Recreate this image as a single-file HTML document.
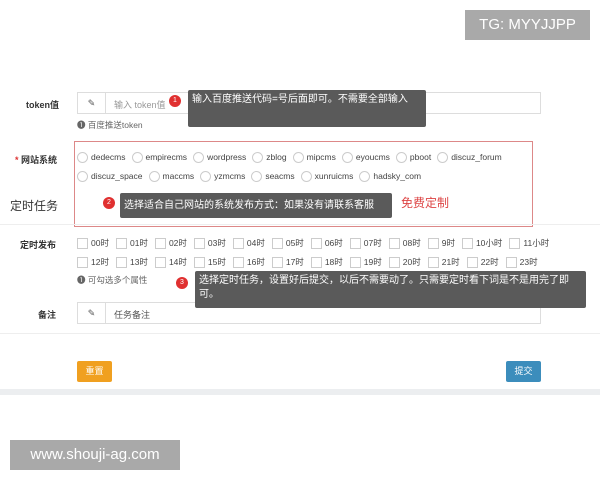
<!DOCTYPE html>
<html><head><meta charset="utf-8"><style>
*{margin:0;padding:0;box-sizing:border-box}
body{width:600px;height:480px;background:#fff;position:relative;overflow:hidden;font-family:"Liberation Sans","Noto Sans CJK SC",sans-serif;font-size:9px;color:#333}
.a{position:absolute;white-space:nowrap}
.lbl{font-weight:bold;font-size:9px;color:#333}
.inp{position:absolute;left:77px;width:464px;height:22px;border:1px solid #ddd;background:#fff}
.inp .ic{position:absolute;left:0;top:0;width:28px;height:20px;border-right:1px solid #ddd;text-align:center;line-height:20px;font-size:9px;color:#555}
.inp .ph{position:absolute;left:36px;top:5px;color:#999}
.tip{position:absolute;background:#5a5a5a;color:#fff;font-size:10px;padding:3px 4px;border-radius:2px;line-height:14px}
.bd{position:absolute;width:12px;height:12px;border-radius:50%;background:#e03030;color:#fff;font-size:7px;text-align:center;line-height:12px}
.r{display:inline-block;width:11px;height:11px;border:1px solid #ccc;border-radius:50%;vertical-align:middle;margin-right:3px}
.c{display:inline-block;width:11px;height:11px;border:1px solid #ccc;vertical-align:middle;margin-right:3px}
.row span{margin-right:6px;font-size:8.5px;color:#444}
.row2 span{margin-right:7px;font-size:8.5px;color:#444}
.hint{color:#666;font-size:8.5px}
</style></head><body>
<div class="a" style="left:465px;top:10px;width:125px;height:30px;background:#a9a9a9;color:#fff;font-size:15px;line-height:30px;text-align:center">TG: MYYJJPP</div>

<div class="a lbl" style="left:26px;top:98px">token值</div>
<div class="inp" style="top:92px"><div class="ic">✎</div><div class="ph">输入 token值</div></div>
<div class="bd" style="left:169px;top:95px">1</div>
<div class="tip" style="left:188px;top:90px;width:238px;height:37px">输入百度推送代码=号后面即可。不需要全部输入</div>
<div class="a hint" style="left:77px;top:119px">❶ 百度推送token</div>

<div class="a" style="left:74px;top:141px;width:459px;height:86px;border:1px solid #d88"></div>
<div class="a lbl" style="left:15px;top:153px"><span style="color:#d33">*</span> 网站系统</div>
<div class="a row" style="left:77px;top:152px"><i class="r"></i><span>dedecms</span><i class="r"></i><span>empirecms</span><i class="r"></i><span>wordpress</span><i class="r"></i><span>zblog</span><i class="r"></i><span>mipcms</span><i class="r"></i><span>eyoucms</span><i class="r"></i><span>pboot</span><i class="r"></i><span>discuz_forum</span></div>
<div class="a row" style="left:77px;top:171px"><i class="r"></i><span>discuz_space</span><i class="r"></i><span>maccms</span><i class="r"></i><span>yzmcms</span><i class="r"></i><span>seacms</span><i class="r"></i><span>xunruicms</span><i class="r"></i><span>hadsky_com</span></div>
<div class="a" style="left:10px;top:197px;font-size:12px;color:#333">定时任务</div>
<div class="a" style="left:0;top:224px;width:600px;height:1px;background:#eee"></div>
<div class="bd" style="left:103px;top:197px">2</div>
<div class="tip" style="left:120px;top:193px;width:272px;height:25px;line-height:19px">选择适合自己网站的系统发布方式：如果没有请联系客服</div>
<div class="a" style="left:401px;top:194px;font-size:12px;color:#d44">免费定制</div>

<div class="a lbl" style="left:20px;top:238px">定时发布</div>
<div class="a row2" style="left:77px;top:237px"><i class="c"></i><span>00时</span><i class="c"></i><span>01时</span><i class="c"></i><span>02时</span><i class="c"></i><span>03时</span><i class="c"></i><span>04时</span><i class="c"></i><span>05时</span><i class="c"></i><span>06时</span><i class="c"></i><span>07时</span><i class="c"></i><span>08时</span><i class="c"></i><span>9时</span><i class="c"></i><span>10小时</span><i class="c"></i><span>11小时</span></div>
<div class="a row2" style="left:77px;top:256px"><i class="c"></i><span>12时</span><i class="c"></i><span>13时</span><i class="c"></i><span>14时</span><i class="c"></i><span>15时</span><i class="c"></i><span>16时</span><i class="c"></i><span>17时</span><i class="c"></i><span>18时</span><i class="c"></i><span>19时</span><i class="c"></i><span>20时</span><i class="c"></i><span>21时</span><i class="c"></i><span>22时</span><i class="c"></i><span>23时</span></div>
<div class="a hint" style="left:77px;top:274px">❶ 可勾选多个属性</div>
<div class="inp" style="top:302px"><div class="ic">✎</div><div class="ph" style="color:#555">任务备注</div></div>
<div class="a lbl" style="left:38px;top:308px">备注</div>
<div class="bd" style="left:176px;top:277px">3</div>
<div class="tip" style="left:195px;top:271px;width:391px;height:37px">选择定时任务，设置好后提交，以后不需要动了。只需要定时看下词是不是用完了即可。</div>
<div class="a" style="left:0;top:333px;width:600px;height:1px;background:#eee"></div>
<div class="a" style="left:77px;top:361px;width:35px;height:21px;background:#f0a020;color:#fff;border-radius:2px;text-align:center;line-height:21px">重置</div>
<div class="a" style="left:506px;top:361px;width:35px;height:21px;background:#3c8dbc;color:#fff;border-radius:2px;text-align:center;line-height:21px">提交</div>
<div class="a" style="left:0;top:389px;width:600px;height:6px;background:#eceef0"></div>
<div class="a" style="left:10px;top:440px;width:170px;height:30px;background:#a9a9a9;color:#fff;font-size:15px;line-height:30px;text-align:center">www.shouji-ag.com</div>
</body></html>
